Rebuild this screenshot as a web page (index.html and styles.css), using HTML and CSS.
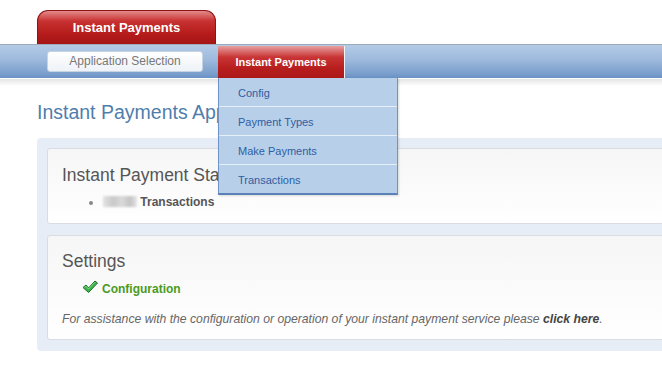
FILE: index.html
```html
<!DOCTYPE html>
<html lang="en">
<head>
  <meta charset="UTF-8">
  <title>Instant Payments</title>
  <link rel="stylesheet" href="styles.css">
</head>
<body>
  <div class="header">
    <div class="tab-row">
      <div class="app-tab">Instant Payments</div>
    </div>
    <div class="navbar">
      <div class="app-select">Application Selection</div>
      <div class="menu">
        <div class="menu-head">Instant Payments</div>
        <ul class="dropdown">
          <li>Config</li>
          <li>Payment Types</li>
          <li>Make Payments</li>
          <li>Transactions</li>
        </ul>
      </div>
    </div>
    <div class="nav-shadow"></div>
  </div>

  <div class="main">
    <h1 class="page-title">Instant Payments Application</h1>
    <div class="panel">
      <div class="card">
        <h2>Instant Payment Status</h2>
        <ul class="status-list">
          <li><span class="blur"></span> Transactions</li>
        </ul>
      </div>
      <div class="card">
        <h2>Settings</h2>
        <div class="config-line">
          <svg class="check" width="16" height="14" viewBox="0 0 16 14">
            <path d="M1 7.5 L4 5 L6.5 8 L13 1 L15.5 3 L6.5 12.5 Z" fill="#3bb54a" stroke="#1f6b2a" stroke-width="1" stroke-linejoin="round"/>
            <path d="M2.5 7.3 L4 6.2 L6.5 9 L13 2.3" fill="none" stroke="#8fe39a" stroke-width="0.8"/>
          </svg>
          <span>Configuration</span>
        </div>
        <p class="help">For assistance with the configuration or operation of your instant payment service please <b>click here</b>.</p>
      </div>
    </div>
  </div>
</body>
</html>
```

FILE: styles.css
```css
body {
  margin: 0;
  font-family: "Liberation Sans", Arial, sans-serif;
  background: #fff;
  overflow: hidden;
}

.tab-row {
  padding: 10px 0 0 37px;
  height: 34px;
  box-sizing: content-box;
}

.app-tab {
  width: 177px;
  height: 33px;
  border: 1px solid #8e1414;
  border-bottom: none;
  border-radius: 11px 11px 0 0;
  background: linear-gradient(#e38b8b 0%, #c93232 30%, #b51b1b 70%, #a51515 100%);
  color: #fff;
  font-weight: bold;
  font-size: 13px;
  line-height: 34px;
  text-align: center;
}

.navbar {
  height: 33px;
  border-top: 1px solid #9dabb9;
  background: linear-gradient(#b4cbe6 0%, #9db9dc 45%, #7ca0cd 85%, #6a91c3 100%);
  display: flex;
  padding-left: 47px;
  position: relative;
  z-index: 2;
}

.app-select {
  margin-top: 6px;
  width: 154px;
  height: 19px;
  border: 1px solid #c5d3e3;
  border-radius: 3px;
  background: linear-gradient(#ffffff, #eef2f7);
  color: #777;
  font-size: 12px;
  line-height: 19px;
  text-align: center;
}

.menu {
  margin-left: 15px;
  position: relative;
}

.menu-head {
  width: 126px;
  height: 32px;
  margin-top: 1px;
  border-right: 1px solid #f1f4f8;
  background: linear-gradient(#e7a0a0 0%, #c93434 35%, #b71e1e 70%, #ad1818 100%);
  color: #fff;
  font-weight: bold;
  font-size: 11px;
  line-height: 32px;
  text-align: center;
}

.dropdown {
  position: absolute;
  top: 33px;
  left: 0;
  width: 178px;
  margin: 0;
  padding: 0;
  list-style: none;
  background: #b8cfea;
  border: 1px solid #6f93c4;
  border-top: none;
  border-bottom: 2px solid #5b82b8;
  box-shadow: 1px 1px 2px rgba(0, 0, 0, 0.15);
}

.dropdown li {
  height: 28px;
  line-height: 30px;
  padding-left: 19px;
  font-size: 11px;
  color: #2f5e9f;
  border-bottom: 1px solid #e6eef8;
}

.dropdown li:last-child {
  border-bottom: none;
}

.nav-shadow {
  height: 7px;
  border-top: 1px solid #fff;
  background: linear-gradient(#e4e4e4, #fff);
}

.main {
  padding-left: 37px;
}

.page-title {
  margin: 14px 0 0;
  font-size: 19.5px;
  font-weight: normal;
  line-height: 24px;
  color: #4f7eab;
  white-space: nowrap;
}

.panel {
  margin-top: 14px;
  width: 700px;
  padding: 10px 10px 11px;
  background: #e6edf6;
  border-radius: 4px;
}

.card {
  background: linear-gradient(#f6f6f6, #ffffff);
  border: 1px solid #d9dde2;
  border-radius: 3px;
  padding: 15px 14px 13px;
}

.card + .card {
  margin-top: 11px;
  padding-top: 14px;
  padding-bottom: 12px;
}

.card h2 {
  margin: 0;
  font-size: 17.5px;
  font-weight: normal;
  line-height: 22px;
  color: #555;
  white-space: nowrap;
}

.status-list {
  margin: 8px 0 0;
  padding-left: 41px;
  font-size: 12px;
  line-height: 16px;
  font-weight: bold;
  color: #555;
}

.status-list li::marker {
  color: #888;
}

.blur {
  display: inline-block;
  width: 34px;
  height: 11px;
  vertical-align: -1px;
  background: linear-gradient(90deg, #e3e3e3, #c9c9c9 30%, #dadada 55%, #c4c4c4 80%, #e6e6e6);
  filter: blur(1px);
}

.config-line {
  margin: 9px 0 0 20px;
  display: flex;
  align-items: center;
  gap: 4px;
  font-size: 12px;
  line-height: 16px;
  font-weight: bold;
  color: #4a9a1f;
}

.check {
  margin-top: -5px;
}

.help {
  margin: 14px 0 0;
  font-size: 12.2px;
  line-height: 16px;
  font-style: italic;
  color: #666;
  white-space: nowrap;
}

.help b {
  color: #444;
}
```
